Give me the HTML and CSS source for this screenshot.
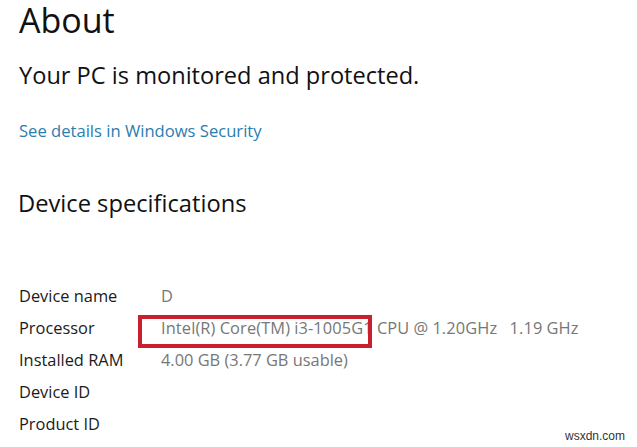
FILE: index.html
```html
<!DOCTYPE html>
<html lang="en">
<head>
<meta charset="utf-8">
<title>About</title>
<link rel="stylesheet" href="styles.css">
</head>
<body>
<main class="page">
  <h1 class="title">About</h1>
  <p class="status">Your PC is monitored and protected.</p>
  <a class="link" href="#">See details in Windows Security</a>
  <h2 class="section">Device specifications</h2>
  <dl class="specs">
    <div class="row"><dt>Device name</dt><dd>D</dd></div>
    <div class="row"><dt>Processor</dt><dd><span class="hl">Intel(R) Core(TM) i3-1005G1 CPU @ 1.20GHz&nbsp;&nbsp; 1.19 GHz<span class="mark"></span></span></dd></div>
    <div class="row"><dt>Installed RAM</dt><dd>4.00 GB (3.77 GB usable)</dd></div>
    <div class="row"><dt>Device ID</dt><dd></dd></div>
    <div class="row"><dt>Product ID</dt><dd></dd></div>
  </dl>
</main>
<div class="watermark">wsxdn.com</div>
</body>
</html>
```
FILE: styles.css
```css
html, body {
  margin: 0;
  padding: 0;
  background: #ffffff;
}
body {
  width: 637px;
  height: 447px;
  overflow: hidden;
  position: relative;
  font-family: "Open Sans", "Noto Sans", sans-serif;
  color: #1b1b1b;
}
.page {
  padding-left: 19px;
  display: flex;
  flex-direction: column;
  align-items: flex-start;
}
.title {
  margin: 0;
  font-size: 34px;
  line-height: 40px;
  font-weight: 400;
  color: #111;
}
.status {
  margin: 20px 0 0;
  font-size: 23.6px;
  line-height: 30px;
  color: #111;
}
.link {
  margin-top: 30px;
  font-size: 16.6px;
  line-height: 22px;
  color: #2b7dad;
  text-decoration: none;
}
.section {
  margin: 46px 0 0 -1px;
  font-size: 23.7px;
  line-height: 30px;
  font-weight: 400;
  color: #111;
}
.specs {
  margin: 62px 0 0;
  display: flex;
  flex-direction: column;
}
.row {
  display: flex;
  height: 32px;
  line-height: 32px;
  font-size: 16.4px;
}
.row dt {
  width: 142px;
  color: #1b1b1b;
}
.row dd {
  margin: 0;
  color: #777777;
  white-space: pre;
}
.hl {
  position: relative;
  letter-spacing: 0.12px;
  word-spacing: -0.3px;
}
.mark {
  position: absolute;
  left: -23px;
  top: -1px;
  width: 234px;
  height: 33px;
  box-sizing: border-box;
  border: 4px solid #c9202f;
}
.watermark {
  position: absolute;
  right: 12px;
  bottom: 4px;
  font-family: "Liberation Sans", Arial, sans-serif;
  font-size: 12px;
  color: #333;
}
```
